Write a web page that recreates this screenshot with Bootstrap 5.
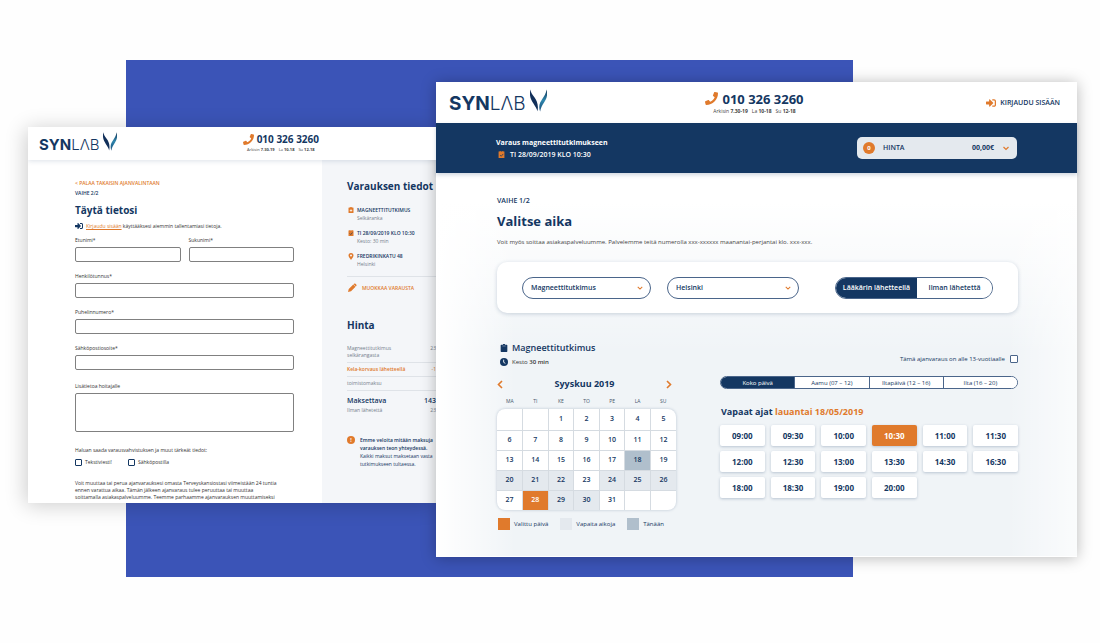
<!DOCTYPE html>
<html lang="fi">
<head>
<meta charset="utf-8">
<meta name="viewport" content="width=device-width, initial-scale=1">
<title>SYNLAB ajanvaraus</title>
<link href="https://cdn.jsdelivr.net/npm/bootstrap@5.3.0/dist/css/bootstrap.min.css" rel="stylesheet">
<style>
:root{--navy:#143762;--orange:#e07a2c;--mist:#e4e9ee;--today:#b0bfcc;--line:#d5dbe1}
body{font-family:"Open Sans",sans-serif;color:var(--navy);background:#fefefe;font-size:7px;line-height:10px}
svg{display:block;flex:none}
a{color:inherit;text-decoration:none}
h1,h2,h3,p,dl,dd{margin:0}
h1,h2,h3{font-weight:700}
button,select{font-family:inherit}
/* showcase: colour block with two overlapping windows */
.stage{display:grid;min-height:100vh;padding-bottom:66px;
 grid-template-columns:minmax(0,28fr) minmax(0,98fr) minmax(0,310fr) minmax(0,417fr) minmax(0,224fr) minmax(0,23fr);
 grid-template-rows:60px 22px 45px 376px minmax(54px,auto) 20px}
.backdrop{grid-area:2/3/7/5;background:#3b54b7}
.win-form,.win-form-shade{grid-area:4/2/5/4}
.win-form{background:#fff;overflow:hidden}
.win-form-shade{box-shadow:-2px 2px 20px rgba(0,0,0,.2)}
.win-time{grid-area:3/4/6/6;background:#fff;box-shadow:0 1px 14px rgba(0,0,0,.28)}
/* brand */
.brand{font-family:Inter,sans-serif;font-size:19px;line-height:24px;gap:4px;align-items:flex-end}
.brand b{font-weight:700}.brand i{font-style:normal;font-weight:300}
.brand svg{width:17px;height:23px;margin-bottom:4px}
.tel{font-weight:700;font-size:13px;line-height:16px;gap:4px}
.hours{font-size:5px;line-height:8px;color:#444}
.hours span+span{margin-left:4px}
.head-time{display:grid;grid-template-columns:1fr auto 1fr;height:41px;padding:0 17px 0 13px}
.login{font-size:7px;font-weight:600;gap:4px}
.band{background:var(--navy);color:#fff;height:50px;padding:0 60px;box-shadow:0 2px 4px rgba(20,55,98,.2);position:relative}
.band-title{font-size:7px;line-height:13px;font-weight:700}
.band-date{font-size:7px;line-height:12px;font-weight:600;gap:5px;padding-left:2px}
.price-btn{width:160px;height:22px;border:0;border-radius:5px;background:var(--mist);color:var(--navy);font-size:7px;font-weight:700;padding:0 7px 0 6px}
.count{width:12px;height:12px;border-radius:50%;background:var(--orange);color:#fff;font-size:6px;line-height:12px;text-align:center}
.main-time{padding:22px 59px 26px 61px;background:linear-gradient(90deg,#fff,rgba(255,255,255,0) 80px),linear-gradient(270deg,rgba(255,255,255,.7),rgba(255,255,255,0) 70px),linear-gradient(#fff 30px,rgba(255,255,255,0) 180px),#f0f4f7}
.step{font-size:7px;line-height:12px;font-weight:600}
.title{font-size:13px;line-height:20px;margin-top:4px}
.lead-in{font-size:6px;line-height:12px;margin-top:5px;color:#444}
.filters{margin-top:14px;height:51px;border-radius:10px;background:#fff;box-shadow:0 1px 4px rgba(20,55,98,.2);padding:0 25px}
.pill{height:22px;border:1px solid #4a658a;border-radius:11px;background-color:#fff;color:var(--navy);font-size:7px;line-height:12px;font-weight:600;padding:0 20px 0 8px;background-size:6px 6px;background-position:right 7px center;
 background-image:url("data:image/svg+xml,%3Csvg xmlns='http://www.w3.org/2000/svg' viewBox='0 0 8 8'%3E%3Cpath d='M1 2.5l3 3 3-3' fill='none' stroke='%23e07a2c' stroke-width='1.4'/%3E%3C/svg%3E")}
.pill-a{width:129px}.pill-b{width:132px}
.toggle{width:158px;height:22px;border:1px solid #4a658a;border-radius:11px;overflow:hidden}
.toggle button{border:0;background:#fff;color:var(--navy);font-size:7px;font-weight:600;padding:0;flex:75}
.toggle button.on{background:var(--navy);color:#fff;flex:81}
.picker{display:grid;grid-template-columns:179px minmax(0,298px);justify-content:space-between;margin-top:28px}
.exam{font-size:9px;line-height:14px;font-weight:600;gap:4px;padding-left:3px}
.dur{font-size:6px;line-height:14px;gap:4px;padding-left:3px;color:#333}
.month{font-size:9px;line-height:14px;margin-top:8px}
.arrow{border:0;background:none;padding:0}
.cal-box{border-radius:8px;box-shadow:0 0 3px rgba(20,55,98,.25);overflow:hidden;background:#fff}
.weekdays{display:grid;grid-template-columns:repeat(7,1fr);font-size:5px;line-height:12px;text-align:center;margin:4px 0 2px;color:#45566b}
.cal{width:100%;table-layout:fixed;border-collapse:collapse;font-size:7px;line-height:10px;font-weight:600;text-align:center}
.cal td{height:20px;padding:0;border:1px solid var(--line);vertical-align:middle}
.cal tr:first-child td{border-top:0;height:21px}.cal tr:last-child td{border-bottom:0}
.cal td:first-child{border-left:0}.cal td:last-child{border-right:0}
.free{background:var(--mist)}.now{background:var(--today)}.cal .sel{background:var(--orange);color:#fff}
.sel-key{background:var(--orange)}
.legend-row{font-size:6px;line-height:12px;margin-top:8px;gap:12px;padding-left:1px}
.legend-row span{display:flex;gap:4px}
.legend-row i{width:12px;height:12px}
.under{font-size:6px;line-height:14px;gap:5px;margin-top:11px}
.tick{margin:0;float:none;border-radius:1px!important;border:1px solid var(--navy);background:#fff;width:7px;height:7px;min-height:0;flex:none}
.under .tick{width:8px;height:8px;border-color:#4a658a}
.dayparts{height:13px;border:1px solid #4a658a;border-radius:7px;overflow:hidden;margin-top:10px;background:#fff}
.dayparts button{flex:1;border:0;border-left:1px solid #4a658a;background:#fff;color:var(--navy);font-size:6px;line-height:10px;padding:0}
.dayparts button.on{background:var(--navy);color:#fff;border-left:0}
.free-title{font-size:9px;line-height:14px;margin:16px 0 6px 1px}
.slots{display:grid;grid-template-columns:repeat(6,minmax(0,1fr));gap:5px 6px}
.slots button{height:21px;border:0;border-radius:2px;background:#fff;color:var(--navy);font-size:8px;line-height:12px;font-weight:700;padding:0;box-shadow:0 1px 3px rgba(20,55,98,.25)}
.slots button.on{background:var(--orange);color:#fff}
/* details form window */
.head-form{height:33px;padding:0 117px 0 11px;background:#fff;box-shadow:0 1px 5px rgba(20,55,98,.15);position:relative}
.head-form .brand{font-size:15px;line-height:20px;gap:3px}
.head-form .brand svg{width:14px;height:19px}
.head-form .tel{font-size:10px;line-height:13px;gap:3px}
.head-form .hours{font-size:4px;line-height:8px}
.cols{display:grid;grid-template-columns:294px minmax(0,1fr);height:343px}
.form-side{padding:18px 28px 0 47px;font-size:5px;line-height:8px;color:#333}
.mini{font-size:5px;line-height:10px;font-weight:600;color:var(--navy)}
.form-side h2{font-size:10px;line-height:14px;margin-top:5px;color:var(--navy)}
.signin{line-height:10px;margin:4px 0 5px;gap:3px}
.signin svg{color:var(--navy)}
.signin a{color:var(--orange);text-decoration:underline}
.field{margin-bottom:10px}
.field label{display:block;line-height:8px;margin-bottom:3px}
.field .form-control{display:block;min-height:0;height:15px;padding:0 4px;border:1px solid #808080;border-radius:2px;font-size:6px;line-height:10px;background:#fff;resize:none}
.message{margin:12px 0 14px}
.message textarea.form-control{height:39px}
.choice{gap:3px}
.terms{margin-top:14px;line-height:7px}
.info-side{background:#f4f6f9;padding:19px 0 0 25px;font-size:5px;line-height:8px;color:#75808c}
.info-side h2{font-size:10px;line-height:14px;color:var(--navy)}
.info-side dt{color:var(--navy);font-weight:600}
.fact{display:grid;grid-template-columns:10px 1fr;align-items:start}
.fact svg{margin:1px 0 0 1px}
.rule{border-top:1px solid #dfe3e8}
.facts{display:grid;gap:7px;margin:13px 0 8px}
.edit{height:22px;gap:5px;font-weight:600;padding-left:1px}
.info-side .sum-title{margin:20px 0 10px}
.sum-row{line-height:7px;padding:3px 0}
.total{font-size:7px;line-height:10px;font-weight:600;color:var(--navy);padding-top:5px}
.note{margin-top:22px;gap:5px;color:var(--navy);white-space:nowrap}
.bang{width:8px;height:8px;border-radius:50%;background:var(--orange);color:#fff;text-align:center;font-weight:700;flex:none}
.orange{color:var(--orange)}
</style>
</head>
<body>
<svg width="0" height="0" class="position-absolute" aria-hidden="true">
 <defs>
  <linearGradient id="leaf" x1="0" y1="0" x2="0" y2="1"><stop offset="0" stop-color="#123456"/><stop offset=".5" stop-color="#2f86ad"/><stop offset="1" stop-color="#164a78"/></linearGradient>
  <symbol id="mark-y" viewBox="0 0 52 68"><path fill="#12305a" d="M1 0C4 22 30 28 23 67C17 44-6 34 1 0z"/><path fill="url(#leaf)" d="M51 0C58 36 36 38 31 68C20 36 46 30 51 0z"/></symbol>
  <symbol id="phone" viewBox="0 0 512 512"><path fill="currentColor" d="M493.4 24.6l-104-24c-11.3-2.6-22.9 3.3-27.5 13.9l-48 112c-4.2 9.8-1.4 21.3 6.9 28l60.6 49.6c-36 76.7-98.9 140.5-177.2 177.2l-49.6-60.6c-6.800-8.300-18.200-11.100-28-6.900l-112 48C3.900 366.500-2 378.100.6 389.400l24 104C27.100 504.200 36.700 512 48 512c256.100 0 464-207.500 464-464 0-11.200-7.700-20.900-18.600-23.400z"/></symbol>
  <symbol id="enter" viewBox="0 0 512 512"><path fill="currentColor" d="M416 448h-84c-6.600 0-12-5.400-12-12v-40c0-6.600 5.400-12 12-12h84c17.700 0 32-14.300 32-32V160c0-17.700-14.300-32-32-32h-84c-6.600 0-12-5.400-12-12V76c0-6.600 5.400-12 12-12h84c53 0 96 43 96 96v192c0 53-43 96-96 96zm-47-209L201 71c-15-15-41-4.500-41 17v96H24c-13.300 0-24 10.700-24 24v96c0 13.300 10.700 24 24 24h136v96c0 21.500 26 32 41 17l168-168c9.300-9.400 9.300-24.600 0-34z"/></symbol>
  <symbol id="cal-ok" viewBox="0 0 12 12"><path fill="currentColor" d="M1 1h10v11H1zM3 0h1.500v2H3zM7.500 0H9v2H7.500z"/><path d="M3.500 7l2 2 3.500-4" fill="none" stroke="#16365c" stroke-width="1.300"/></symbol>
  <symbol id="clip" viewBox="0 0 12 12"><path fill="currentColor" d="M2 1h2.500a1.500 1.500 0 013 0H10q1 0 1 1v9q0 1-1 1H2q-1 0-1-1V2q0-1 1-1z"/><path d="M3.500 3h5" stroke="#8fa2b8"/></symbol>
  <symbol id="clip-plus" viewBox="0 0 12 12"><path fill="currentColor" d="M2 1h2.500a1.500 1.500 0 013 0H10q1 0 1 1v9q0 1-1 1H2q-1 0-1-1V2q0-1 1-1z"/><path d="M6 4.500v5M3.500 7h5" stroke="#fff" stroke-width="1.400"/></symbol>
  <symbol id="chev" viewBox="0 0 8 8"><path d="M1.500 3l2.500 2.500L6.500 3" fill="none" stroke="currentColor" stroke-width="1.200"/></symbol>
 </defs>
</svg>
<main class="stage">
 <div class="backdrop"></div>
 <div class="win-form-shade"></div>

 <section class="win-form" aria-label="Omat tiedot">
  <header class="head-form d-flex align-items-center justify-content-between">
   <a href="#" class="brand d-flex" aria-label="SYNLAB"><span><b>SYN</b><i>LΛB</i></span><svg><use href="#mark-y"/></svg></a>
   <div>
    <a href="#" class="tel d-flex align-items-center"><svg width="11" height="11" class="orange"><use href="#phone"/></svg>010 326 3260</a>
    <div class="hours text-center"><span>Arkisin <b>7.30-19</b></span><span>La <b>10-18</b></span><span>Su <b>12-18</b></span></div>
   </div>
  </header>
  <div class="cols">
   <form class="form-side">
    <a href="#" class="mini orange d-block">&lt; PALAA TAKAISIN AJANVALINTAAN</a>
    <div class="mini">VAIHE 2/2</div>
    <h2>Täytä tietosi</h2>
    <p class="signin d-flex align-items-center"><svg width="8" height="8"><use href="#enter"/></svg><span><a href="#">Kirjaudu sisään</a> käyttääksesi aiemmin tallentamiasi tietoja.</span></p>
    <div class="d-flex gap-2">
     <div class="field flex-fill"><label for="fn">Etunimi*</label><input id="fn" class="form-control"></div>
     <div class="field flex-fill"><label for="ln">Sukunimi*</label><input id="ln" class="form-control"></div>
    </div>
    <div class="field"><label for="ssn">Henkilötunnus*</label><input id="ssn" class="form-control"></div>
    <div class="field"><label for="ph">Puhelinnumero*</label><input id="ph" class="form-control" type="tel"></div>
    <div class="field"><label for="em">Sähköpostiosoite*</label><input id="em" class="form-control" type="email"></div>
    <div class="field message"><label for="msg">Lisätietoa hoitajalle</label><textarea id="msg" class="form-control"></textarea></div>
    <p>Haluan saada varausvahvistuksen ja muut tärkeät tiedot:</p>
    <div class="d-flex mt-1">
     <label class="choice d-flex align-items-center me-3"><input type="checkbox" class="form-check-input tick">Tekstiviesti!</label>
     <label class="choice d-flex align-items-center"><input type="checkbox" class="form-check-input tick">Sähköpostilla</label>
    </div>
    <p class="terms">Voit muuttaa tai perua ajanvarauksesi omasta Terveyskansiostasi viimeistään 24 tuntia<br>ennen varattua aikaa. Tämän jälkeen ajanvaraus tulee peruuttaa tai muuttaa<br>soittamalla asiakaspalveluumme. Teemme parhaamme ajanvarauksen muuttamiseksi</p>
   </form>
   <aside class="info-side">
    <h2 class="text-nowrap">Varauksen tiedot</h2>
    <dl class="facts">
     <div class="fact"><svg class="orange" width="6" height="6"><use href="#clip-plus"/></svg><div><dt>MAGNEETTITUTKIMUS</dt><dd>Selkäranka</dd></div></div>
     <div class="fact"><svg class="orange" width="6" height="6"><use href="#cal-ok"/></svg><div><dt>TI 28/09/2019 KLO 10:30</dt><dd>Kesto: 30 min</dd></div></div>
     <div class="fact"><svg class="orange" width="6" height="7" viewBox="0 0 12 14"><path fill="currentColor" fill-rule="evenodd" d="M6 0a5 5 0 015 5c0 3-3 5.500-5 9-2-3.500-5-6-5-9a5 5 0 015-5zm0 3a2 2 0 100 4 2 2 0 000-4z"/></svg><div><dt>FREDRIKINKATU 48</dt><dd>Helsinki</dd></div></div>
    </dl>
    <a href="#" class="edit rule orange d-flex align-items-center"><svg width="9" height="9" viewBox="0 0 12 12"><path fill="currentColor" d="M0 12l1-4 6-6 3 3-6 6zM8 1q1-1 2 0l1 1q1 1 0 2l-.5.5-3-3z"/></svg>MUOKKAA VARAUSTA</a>
    <h2 class="sum-title">Hinta</h2>
    <div class="sum-row d-flex justify-content-between"><span>Magneettitutkimus<br>selkärangasta</span><span>23</span></div>
    <div class="sum-row rule orange d-flex justify-content-between"><b class="fw-semibold">Kela-korvaus lähetteellä</b><span>-1</span></div>
    <div class="sum-row rule"><span>toimistomaksu</span></div>
    <div class="total rule d-flex justify-content-between"><span>Maksettava</span><span>143</span></div>
    <div class="without d-flex justify-content-between"><span>Ilman lähetettä</span><span>23</span></div>
    <div class="note d-flex"><span class="bang">!</span><p><b class="fw-semibold">Emme veloita mitään maksuja<br>varauksen teon yhteydessä.</b><br>Kaikki maksut maksetaan vasta<br>tutkimukseen tultaessa.</p></div>
   </aside>
  </div>
 </section>

 <section class="win-time" aria-label="Ajan valinta">
  <header class="head-time align-items-center">
   <a href="#" class="brand d-flex" aria-label="SYNLAB"><span><b>SYN</b><i>LΛB</i></span><svg><use href="#mark-y"/></svg></a>
   <div>
    <a href="#" class="tel d-flex align-items-center"><svg width="13" height="13" class="orange"><use href="#phone"/></svg>010 326 3260</a>
    <div class="hours text-center"><span>Arkisin <b>7.30-19</b></span><span>La <b>10-18</b></span><span>Su <b>12-18</b></span></div>
   </div>
   <a href="#" class="login d-flex align-items-center justify-content-end"><svg width="10" height="10" class="orange"><use href="#enter"/></svg>KIRJAUDU SISÄÄN</a>
  </header>
  <div class="band d-flex align-items-center justify-content-between">
   <div>
    <div class="band-title">Varaus magneettitutkimukseen</div>
    <div class="band-date d-flex align-items-center"><svg width="7" height="7" class="orange"><use href="#cal-ok"/></svg>TI 28/09/2019 KLO 10:30</div>
   </div>
   <button type="button" class="price-btn d-flex align-items-center"><span class="count">0</span><span class="ms-2 fw-semibold">HINTA</span><span class="ms-auto">00,00€</span><svg class="orange ms-2" width="8" height="8"><use href="#chev"/></svg></button>
  </div>
  <div class="main-time">
   <div class="step">VAIHE 1/2</div>
   <h1 class="title">Valitse aika</h1>
   <p class="lead-in">Voit myös soittaa asiakaspalveluumme. Palvelemme teitä numerolla xxx-xxxxxx maanantai-perjantai klo. xxx-xxx.</p>
   <div class="filters d-flex align-items-center">
    <select class="form-select pill pill-a" aria-label="Tutkimus"><option>Magneettitutkimus</option></select>
    <select class="form-select pill pill-b ms-3" aria-label="Kaupunki"><option>Helsinki</option></select>
    <div class="toggle d-flex ms-auto"><button type="button" class="on">Lääkärin lähetteellä</button><button type="button">Ilman lähetettä</button></div>
   </div>
   <div class="picker">
    <div>
     <h2 class="exam d-flex align-items-center m-0"><svg width="8" height="8"><use href="#clip"/></svg>Magneettitutkimus</h2>
     <div class="dur d-flex align-items-center"><svg width="8" height="8" viewBox="0 0 12 12"><circle cx="6" cy="6" r="6" fill="#143762"/><path d="M5.500 2.500V6.500L8 8" fill="none" stroke="#fff" stroke-width="1.300"/></svg><span>Kesto <b class="fw-semibold">30 min</b></span></div>
     <div class="month d-flex align-items-center justify-content-between">
      <button type="button" class="arrow" aria-label="Edellinen kuukausi"><svg class="orange" width="6" height="9" viewBox="0 0 6 9"><path d="M5 1L1.500 4.500 5 8" fill="none" stroke="currentColor" stroke-width="1.600"/></svg></button>
      <b>Syyskuu 2019</b>
      <button type="button" class="arrow me-1" aria-label="Seuraava kuukausi"><svg class="orange" width="6" height="9" viewBox="0 0 6 9"><path d="M1 1l3.500 3.500L1 8" fill="none" stroke="currentColor" stroke-width="1.600"/></svg></button>
     </div>
     <div class="weekdays"><span>MA</span><span>TI</span><span>KE</span><span>TO</span><span>PE</span><span>LA</span><span>SU</span></div>
     <div class="cal-box"><table class="cal"><tbody>
      <tr><td></td><td></td><td>1</td><td>2</td><td>3</td><td>4</td><td>5</td></tr>
      <tr><td>6</td><td>7</td><td>8</td><td>9</td><td>10</td><td>11</td><td>12</td></tr>
      <tr><td>13</td><td>14</td><td>15</td><td>16</td><td>17</td><td class="now">18</td><td>19</td></tr>
      <tr><td class="free">20</td><td class="free">21</td><td class="free">22</td><td>23</td><td class="free">24</td><td class="free">25</td><td class="free">26</td></tr>
      <tr><td>27</td><td class="sel">28</td><td class="free">29</td><td class="free">30</td><td>31</td><td></td><td></td></tr>
     </tbody></table></div>
     <div class="legend-row d-flex"><span><i class="sel-key"></i>Valittu päivä</span><span><i class="free"></i>Vapaita aikoja</span><span><i class="now"></i>Tänään</span></div>
    </div>
    <div>
     <label class="under d-flex align-items-center justify-content-end">Tämä ajanvaraus on alle 13-vuotiaalle<input type="checkbox" class="form-check-input tick"></label>
     <div class="dayparts d-flex"><button type="button" class="on">Koko päivä</button><button type="button">Aamu (07 – 12)</button><button type="button">Iltapäivä (12 – 16)</button><button type="button">Ilta (16 – 20)</button></div>
     <h2 class="free-title">Vapaat ajat <span class="orange">lauantai 18/05/2019</span></h2>
     <div class="slots">
      <button type="button">09:00</button><button type="button">09:30</button><button type="button">10:00</button><button type="button" class="on">10:30</button><button type="button">11:00</button><button type="button">11:30</button>
      <button type="button">12:00</button><button type="button">12:30</button><button type="button">13:00</button><button type="button">13:30</button><button type="button">14:30</button><button type="button">16:30</button>
      <button type="button">18:00</button><button type="button">18:30</button><button type="button">19:00</button><button type="button">20:00</button>
     </div>
    </div>
   </div>
  </div>
 </section>
</main>
<script src="https://cdn.jsdelivr.net/npm/bootstrap@5.3.0/dist/js/bootstrap.bundle.min.js"></script>
</body>
</html>
